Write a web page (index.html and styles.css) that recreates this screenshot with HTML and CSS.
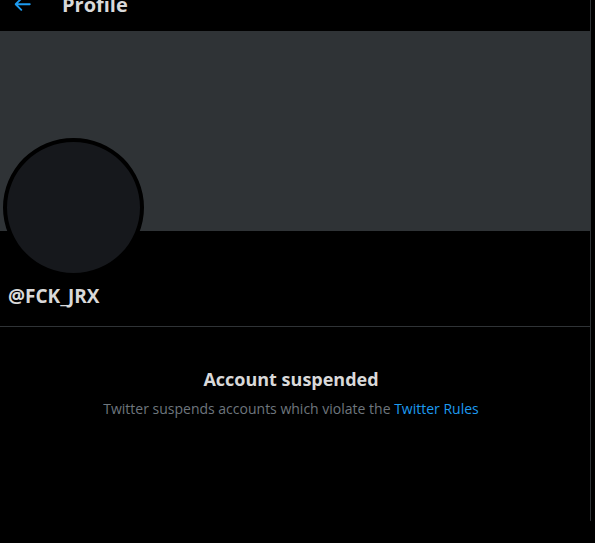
FILE: index.html
```html
<!DOCTYPE html>
<html>
<head>
<meta charset="utf-8">
<link rel="stylesheet" href="styles.css">
</head>
<body>
<main class="column">
  <header class="topbar">
    <div class="back">
      <svg viewBox="0 0 24 24" class="back-icon"><path d="M20 11H7.414l4.293-4.293c.39-.39.39-1.023 0-1.414s-1.023-.39-1.414 0l-6 6c-.39.39-.39 1.023 0 1.414l6 6c.195.195.45.293.707.293s.512-.098.707-.293c.39-.39.39-1.023 0-1.414L7.414 13H20c.553 0 1-.447 1-1s-.447-1-1-1z"/></svg>
    </div>
    <h2 class="title">Profile</h2>
  </header>
  <div class="banner"></div>
  <section class="profile">
    <div class="avatar"></div>
    <div class="handle">@FCK_JRX</div>
  </section>
  <section class="notice">
    <div class="notice-title">Account suspended</div>
    <div class="notice-text">Twitter suspends accounts which violate the <a href="#" class="link">Twitter Rules</a></div>
  </section>
</main>
</body>
</html>
```
FILE: styles.css
```css
html, body {
  margin: 0;
  padding: 0;
  background: #000;
  height: 100%;
  overflow: hidden;
}
body {
  font-family: "Open Sans", "Noto Sans", sans-serif;
  color: #d9d9d9;
}
.column {
  width: 590px;
  min-height: 100%;
  border-right: 1px solid #2f3336;
  box-sizing: content-box;
}
.topbar {
  height: 53px;
  margin-top: -22px;
  display: flex;
  align-items: center;
  padding-left: 11px;
}
.back {
  width: 22.5px;
  height: 22.5px;
  display: flex;
}
.back-icon {
  width: 22.5px;
  height: 22.5px;
  fill: #1d9bf0;
}
.title {
  margin: 0 0 0 28.5px;
  font-size: 20px;
  line-height: 24px;
  font-weight: 700;
  color: #d9d9d9;
}
.banner {
  height: 200px;
  background: #2f3336;
}
.profile {
  display: flex;
  flex-direction: column;
  align-items: flex-start;
  padding: 0 0 0 3px;
  height: 95px;
  border-bottom: 1px solid #2f3336;
}
.avatar {
  width: 141px;
  height: 139px;
  flex: none;
  box-sizing: border-box;
  border: 4px solid #000;
  border-radius: 50%;
  background: #16181c;
  margin-top: -93px;
}
.handle {
  margin: 7px 0 0 5px;
  font-size: 19px;
  line-height: 24px;
  font-weight: 700;
  color: #d9d9d9;
}
.notice {
  padding: 40px 8px 0 0;
  text-align: center;
}
.notice-title {
  font-size: 18px;
  line-height: 24px;
  font-weight: 700;
  color: #d9d9d9;
}
.notice-text {
  margin-top: 8px;
  font-size: 14px;
  line-height: 19px;
  color: #6e767d;
}
.link {
  color: #1d9bf0;
  text-decoration: none;
}
```
